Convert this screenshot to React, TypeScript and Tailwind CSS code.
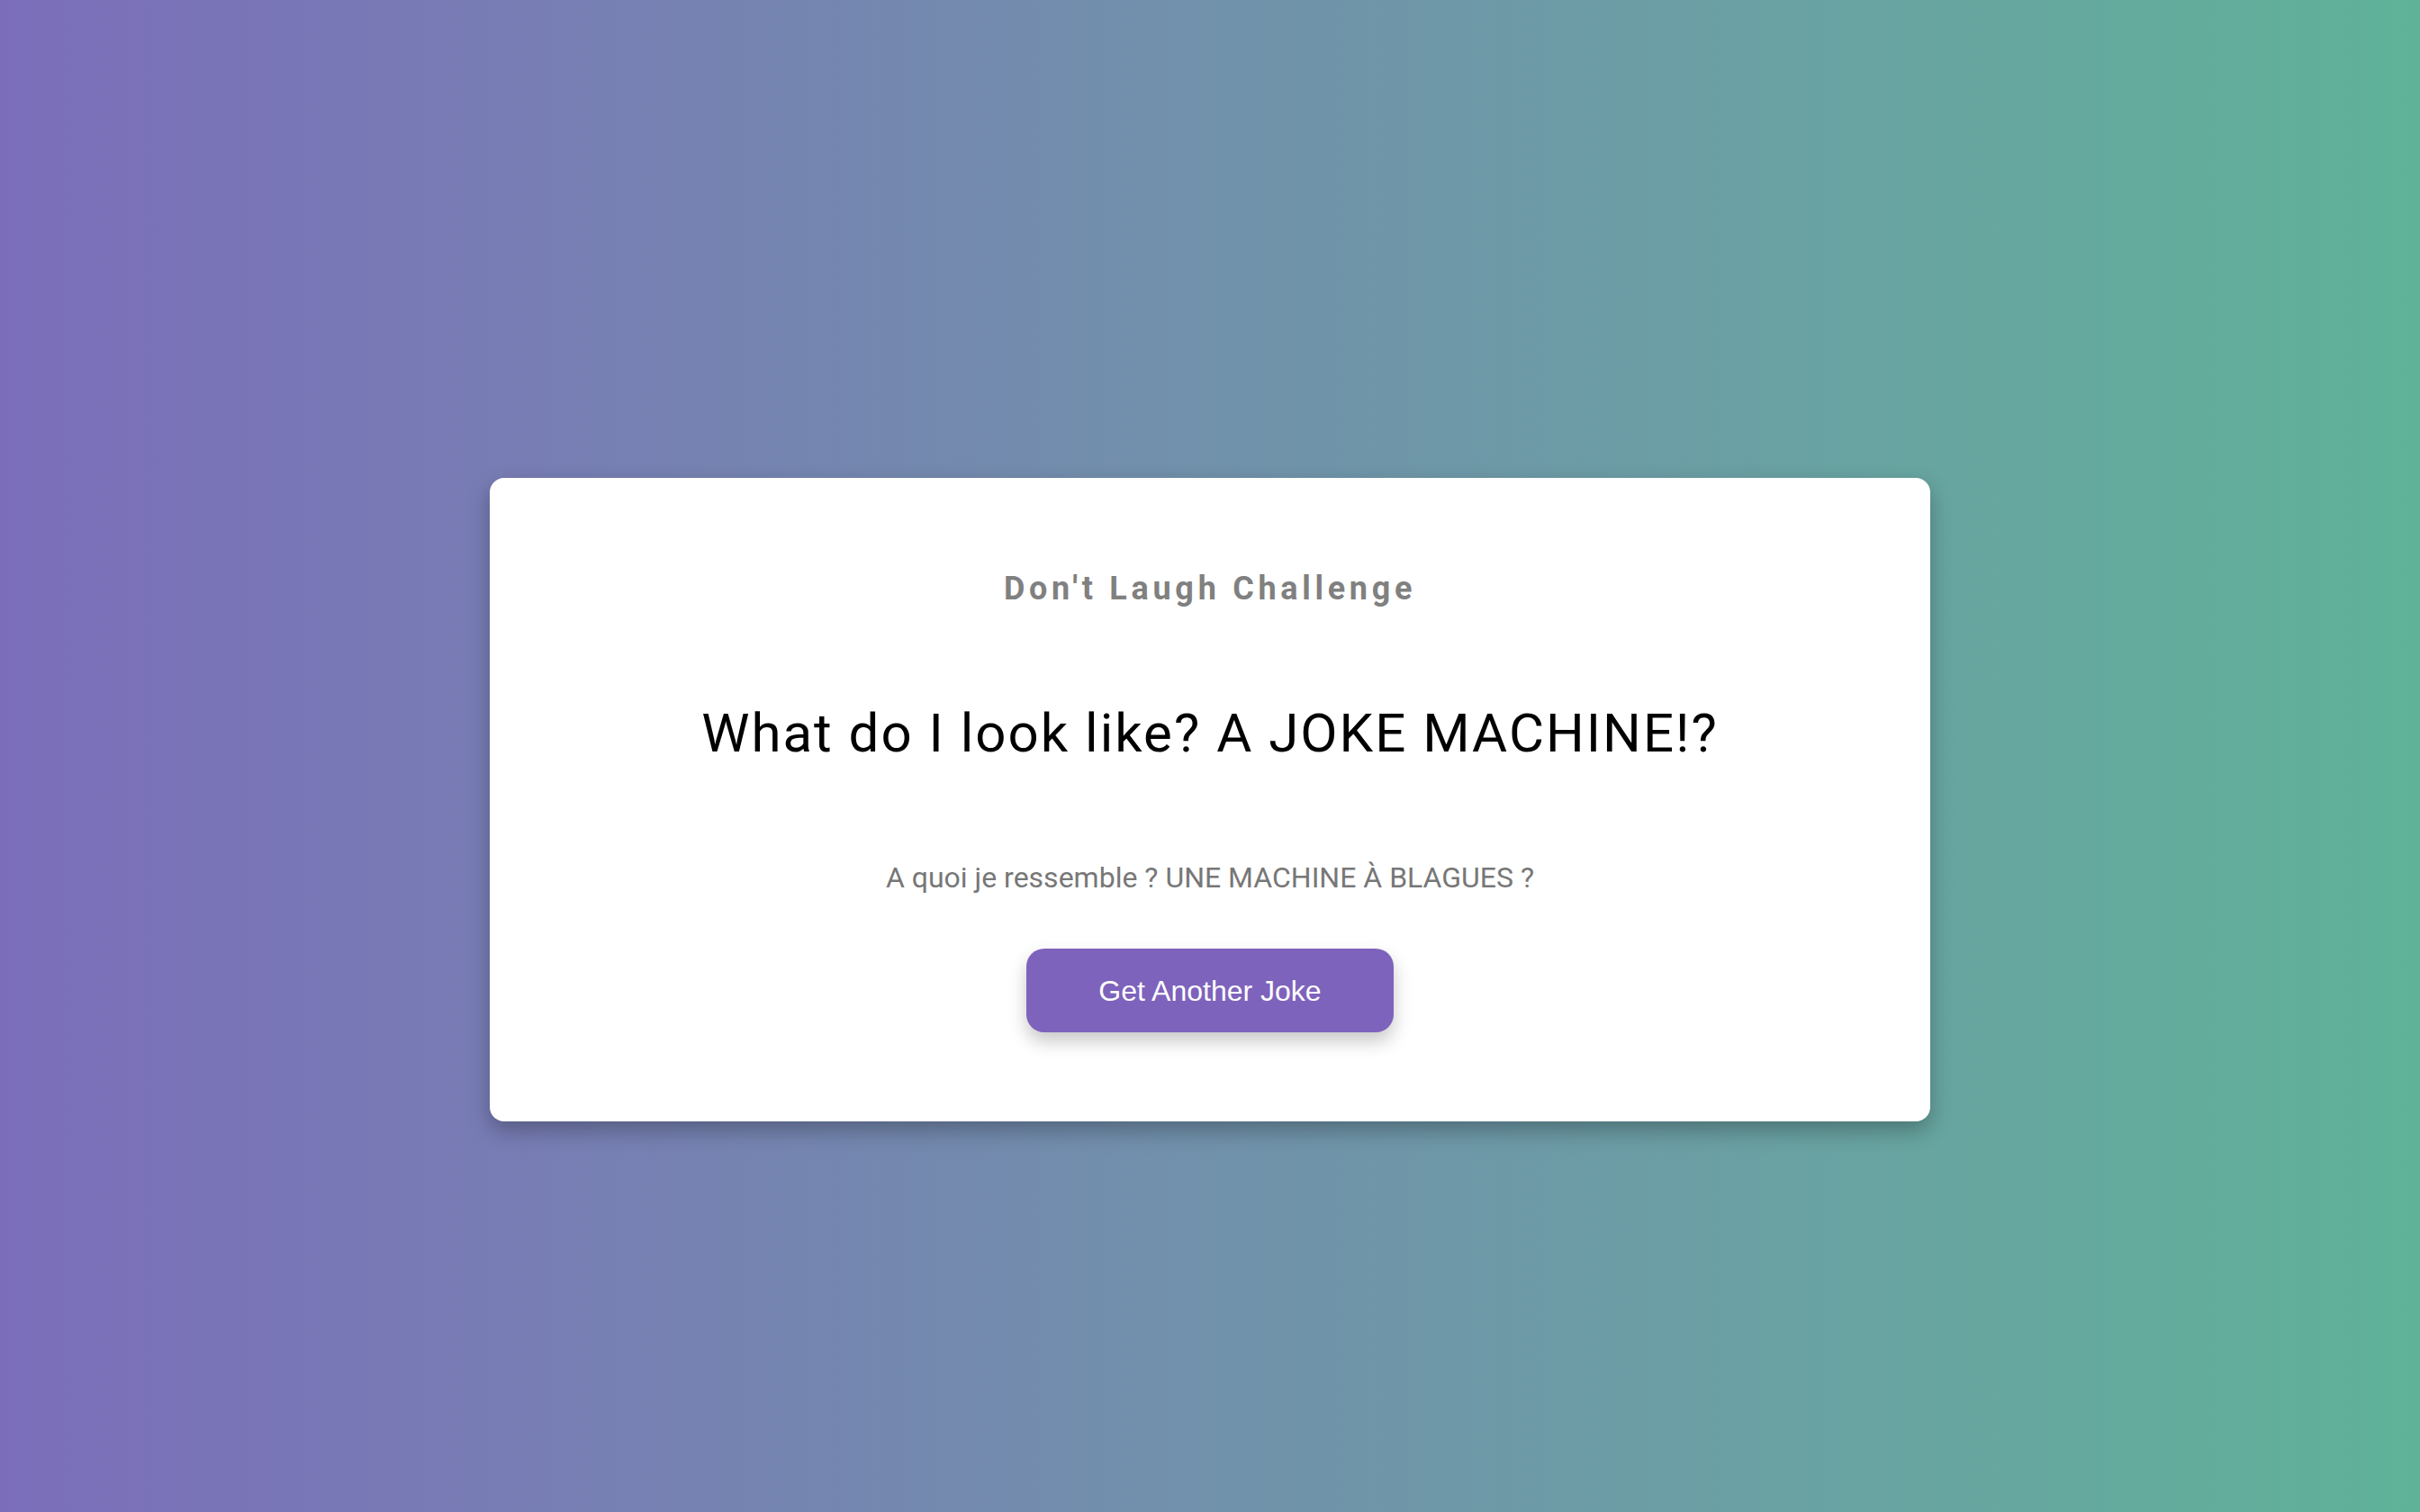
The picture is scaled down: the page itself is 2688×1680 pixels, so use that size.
export default function App() {
  return (
    <div className="min-h-screen w-full bg-gradient-to-r from-[#7b6dba] to-[#5fb298] flex justify-center pt-[531px] font-['Roboto',sans-serif]">
      {/* card */}
      <div className="w-[1600px] h-[715px] bg-white rounded-[16px] shadow-[0_10px_24px_rgba(0,0,0,0.28)] flex flex-col items-center pt-[105px]">
        <h2 className="text-[36px] leading-none font-bold tracking-[4.7px] text-[#808080]">
          Don't Laugh Challenge
        </h2>
        <p className="mt-[113px] text-[60px] leading-none text-black tracking-[2px]">
          What do I look like? A JOKE MACHINE!?
        </p>
        <p className="mt-[114px] text-[32px] leading-none text-[#777777]">
          A quoi je ressemble ? UNE MACHINE À BLAGUES ?
        </p>
        <button className="mt-[63px] w-[408px] h-[93px] rounded-[20px] bg-[#7e63bc] text-white text-[32px] font-['Liberation_Sans',Arial,sans-serif] shadow-[0_10px_20px_rgba(0,0,0,0.22)]">
          Get Another Joke
        </button>
      </div>
    </div>
  );
}
